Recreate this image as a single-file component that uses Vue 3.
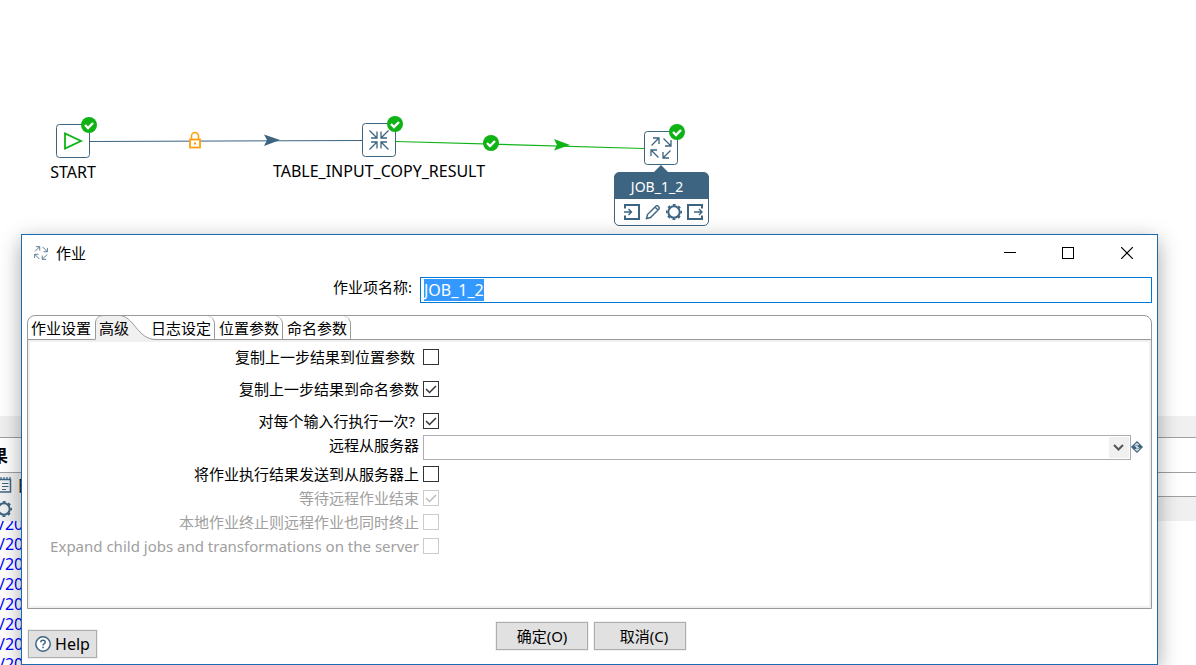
<script setup>
import { onMounted, ref } from 'vue'

const nameInput = ref(null)
const jobName = ref('JOB_1_2')
const activeTab = ref('高级')
const tabs = ['作业设置', '高级', '日志设定', '位置参数', '命名参数']
const logLines = ['/20', '/20', '/20', '/20', '/20', '/20', '/20', '/20']

const beforeSlave = ref([
  { id: 'args', label: '复制上一步结果到位置参数', checked: false, inset: true },
  { id: 'params', label: '复制上一步结果到命名参数', checked: true },
  { id: 'each-row', label: '对每个输入行执行一次?', checked: true, inset: true }
])
const afterSlave = ref([
  { id: 'pass', label: '将作业执行结果发送到从服务器上', checked: false },
  { id: 'wait', label: '等待远程作业结束', checked: true, disabled: true },
  { id: 'abort', label: '本地作业终止则远程作业也同时终止', checked: false, disabled: true },
  { id: 'expand', label: 'Expand child jobs and transformations on the server', checked: false, disabled: true }
])

onMounted(() => {
  nameInput.value.focus()
  nameInput.value.select()
})
</script>

<template>
  <main class="workspace">
    <section class="canvas">
      <svg class="graph" width="720" height="240" viewBox="0 0 720 240" aria-hidden="true">
        <defs>
          <g id="ok-badge">
            <circle r="8" fill="#0fb316" />
            <path d="M-4 0 L-1 3 L4 -2" fill="none" stroke="#fff" stroke-width="2.4" />
          </g>
          <g id="arrows-out" fill="none" stroke="#3d6480" stroke-width="1.3">
            <path d="M-9.5 -2.5 L-2.5 -9.5 M-8 -10 H-2 V-4" />
            <path d="M2.5 -9.5 L9.5 -2.5 M10 -8 V-2 H4" />
            <path d="M9.5 2.5 L2.5 9.5 M2 4 V10 H8" />
            <path d="M-2.5 9.5 L-9.5 2.5 M-10 8 V2 H-4" />
          </g>
        </defs>
        <path d="M90 141.5 L362 140.5" stroke="#3d6480" />
        <path d="M396 141.5 L644 148.5" stroke="#0fb316" stroke-width="1.2" />
        <path d="M264 134.5 L280 140 L264 146 L267 140 Z" fill="#3d6480" />
        <path d="M554 139 L570 145 L554 150.5 L557 145 Z" fill="#0fb316" />
        <g fill="none" stroke="#ff9f0f">
          <path d="M191.5 139 V136 A3.5 3.5 0 0 1 198.5 136 V139" stroke-width="1.6" />
          <rect x="190" y="139.5" width="10" height="8" fill="#fff" stroke-width="1.8" />
          <path d="M194 143.5 h2" stroke-width="2" />
        </g>
        <g fill="#fff" stroke="#3d6480">
          <rect x="56.5" y="124.5" width="33" height="33" rx="3" />
          <rect x="362.5" y="123.5" width="33" height="33" rx="3" />
          <rect x="644.5" y="131.5" width="33" height="33" rx="3" />
        </g>
        <path d="M65 133.5 V148.5 L81 141 Z" fill="none" stroke="#0fb316" stroke-width="1.8" />
        <g fill="none" stroke="#3d6480" stroke-width="1.3">
          <path d="M369.5 130.5 L376.5 137.5 M377 131.5 V138 H371" />
          <path d="M388.5 130.5 L381.5 137.5 M381 131.5 V138 H387" />
          <path d="M369.5 149.5 L376.5 142.5 M371 142 H377 V148.5" />
          <path d="M388.5 149.5 L381.5 142.5 M387 142 H381 V148.5" />
        </g>
        <use href="#arrows-out" x="661" y="148" />
        <use href="#ok-badge" x="89" y="125" />
        <use href="#ok-badge" x="395" y="124" />
        <use href="#ok-badge" x="491" y="143" />
        <use href="#ok-badge" x="677" y="132" />
      </svg>
      <span class="node-label start">START</span>
      <span class="node-label table">TABLE_INPUT_COPY_RESULT</span>
      <div class="hover-card">
        <div class="hover-name">JOB_1_2</div>
        <div class="hover-tools">
          <button type="button" aria-label="Input">
            <svg width="16" height="16" viewBox="0 0 16 16" fill="none" stroke="#3d6480">
              <path d="M1 4.5 V1 H15 V15 H1 V11.5" stroke-width="2" />
              <path d="M0 8 H7 M4.5 5 L7.5 8 L4.5 11" stroke-width="1.4" />
            </svg>
          </button>
          <button type="button" aria-label="Edit">
            <svg width="16" height="16" viewBox="0 0 16 16" fill="none" stroke="#3d6480" stroke-width="1.4">
              <path d="M1.5 14.5 L2.5 10.5 L10.8 2.2 Q12 1 13.4 2.5 Q15 4 13.8 5.2 L5.5 13.5 Z M10 3 L13 6" />
            </svg>
          </button>
          <button type="button" aria-label="Settings">
            <svg width="16" height="16" viewBox="0 0 16 16" fill="none" stroke="#3d6480">
              <circle cx="8" cy="8" r="5.7" stroke-width="2" />
              <circle cx="8" cy="8" r="7.2" stroke-width="1.7" stroke-dasharray="2.8 2.855" stroke-dashoffset="1.4" />
            </svg>
          </button>
          <button type="button" aria-label="Output">
            <svg width="16" height="16" viewBox="0 0 16 16" fill="none" stroke="#3d6480">
              <path d="M15 4.5 V1 H1 V15 H15 V11.5" stroke-width="2" />
              <path d="M7 8 H15 M12 5 L15 8 L12 11" stroke-width="1.4" />
            </svg>
          </button>
        </div>
      </div>
    </section>

    <section class="results">
      <div class="sash"></div>
      <h2 class="results-title">果</h2>
      <div class="results-tabs">
        <div class="results-tab">
          <svg width="12" height="16" viewBox="0 0 12 16" fill="none" stroke="#3d6480">
            <path d="M0 2.5 H10.5 V15 H0" stroke-width="1.5" />
            <path d="M1 0 V3 M4 0 V3 M7 0 V3 M10 0 V3" stroke-width="1.2" />
            <path d="M2 6.5 H8.5 M2 9.5 H8.5 M2 12.5 H6" />
          </svg>
          <span>日志</span>
        </div>
      </div>
      <div class="results-tools">
        <svg width="12" height="16" viewBox="4 0 12 16" fill="none" stroke="#3d6480">
          <circle cx="8" cy="8" r="5.7" stroke-width="2" />
          <circle cx="8" cy="8" r="7.2" stroke-width="1.7" stroke-dasharray="2.8 2.855" stroke-dashoffset="1.4" />
        </svg>
      </div>
      <div class="log">
        <div v-for="(line, i) in logLines" :key="i">{{ line }}</div>
      </div>
    </section>

    <form class="dialog" role="dialog" aria-label="作业" @submit.prevent>
      <header class="title-bar">
        <svg class="title-icon" width="14" height="14" viewBox="-11 -11 22 22" aria-hidden="true">
          <use href="#arrows-out" />
        </svg>
        <span class="title">作业</span>
        <button type="button" aria-label="Minimize">
          <svg width="12" height="12"><path d="M0 5.5 H12" stroke="#000" /></svg>
        </button>
        <button type="button" aria-label="Maximize">
          <svg width="12" height="12"><rect x=".5" y=".5" width="11" height="11" fill="none" stroke="#000" /></svg>
        </button>
        <button type="button" class="close" aria-label="Close">
          <svg width="12" height="12"><path d="M0 0 L12 12 M12 0 L0 12" stroke="#000" stroke-width="1.2" /></svg>
        </button>
      </header>

      <div class="name-row">
        <label for="job-name">作业项名称:</label>
        <input id="job-name" ref="nameInput" v-model="jobName" type="text" autocomplete="off" spellcheck="false" />
      </div>

      <section class="folder">
        <nav class="tabs" role="tablist">
          <button
            v-for="tab in tabs"
            :key="tab"
            type="button"
            role="tab"
            class="tab"
            :class="{ active: tab === activeTab }"
            :aria-selected="tab === activeTab"
            @click="activeTab = tab"
          >
            <svg v-if="tab === activeTab" class="tab-shape" width="62" height="25" viewBox="0 0 62 25" aria-hidden="true">
              <path d="M.5 25 V7 L7 .5 H24 C39 .5 42 24.5 61 24.5 V25 Z" fill="#f0f0f0" />
              <path d="M.5 24 V7 Q1.5 1.5 7 .5 H24 C39 .5 42 24.5 61 24.5" fill="none" stroke="#999" />
            </svg>
            <span>{{ tab }}</span>
          </button>
        </nav>
        <div class="page">
          <div class="group spaced">
            <div v-for="row in beforeSlave" :key="row.id" class="row">
              <label :for="row.id" :class="{ inset: row.inset }">{{ row.label }}</label>
              <span class="check">
                <input :id="row.id" v-model="row.checked" type="checkbox" />
                <svg v-if="row.checked" width="16" height="16"><path d="M3 8 L6.5 11.5 L13 5" /></svg>
              </span>
            </div>
          </div>
          <div class="row combo-row">
            <label for="slave">远程从服务器</label>
            <span class="combo">
              <select id="slave"><option></option></select>
              <svg class="combo-arrow" width="20" height="21" aria-hidden="true">
                <rect width="20" height="21" fill="#f0f0f0" />
                <path d="M5 8 L9.5 12.5 L14 8" fill="none" stroke="#555" stroke-width="2" />
              </svg>
            </span>
            <svg class="variable" width="12" height="13" viewBox="0 0 12 13" aria-hidden="true">
              <path d="M6 .5 L11.5 6 L6 11.5 L.5 6 Z" fill="#3d6480" stroke="#3d6480" stroke-linejoin="round" />
              <path d="M8 4 Q7.5 3 6 3 Q4 3 4 4.5 Q4 5.7 6 6 Q8 6.3 8 7.5 Q8 9 6 9 Q4.5 9 4 8 M6 2 V10" fill="none" stroke="#fff" stroke-width=".9" />
            </svg>
          </div>
          <div class="group">
            <div v-for="row in afterSlave" :key="row.id" class="row" :class="{ off: row.disabled }">
              <label :for="row.id">{{ row.label }}</label>
              <span class="check">
                <input :id="row.id" v-model="row.checked" type="checkbox" :disabled="row.disabled" />
                <svg v-if="row.checked" width="16" height="16"><path d="M3 8 L6.5 11.5 L13 5" /></svg>
              </span>
            </div>
          </div>
        </div>
      </section>

      <footer class="footer">
        <button type="button" class="btn help">
          <svg width="16" height="16" viewBox="0 0 16 16" fill="none" stroke="#3d6480" aria-hidden="true">
            <circle cx="8" cy="8" r="7.2" fill="#fff" stroke-width="1.5" />
            <path d="M5.8 6.3 Q5.8 4.3 8 4.3 Q10.2 4.3 10.2 6.2 Q10.2 7.3 9 7.9 Q8 8.4 8 9.6 M8 10.8 V12.2" stroke-width="1.5" />
          </svg>
          Help
        </button>
        <div class="actions">
          <button type="submit" class="btn">确定(O)</button>
          <button type="button" class="btn cancel">取消(C)</button>
        </div>
      </footer>
    </form>
  </main>
</template>

<style>
body {
  margin: 0;
  overflow: hidden;
  background: #fff;
}
</style>

<style scoped>
.workspace {
  position: relative;
  display: flex;
  flex-direction: column;
  height: 100vh;
  overflow: hidden;
  color: #000;
  font: 15px/20px "Noto Sans", "Noto Sans CJK SC", sans-serif;
}
button, input, select {
  font: inherit;
  color: inherit;
}
button {
  padding: 0;
  border: 0;
  background: none;
}
svg {
  display: block;
  flex: none;
}

.canvas {
  position: relative;
  flex: none;
  height: 416px;
}
.graph {
  position: absolute;
  top: 0;
  left: 0;
}
.node-label {
  position: absolute;
  transform: translateX(-50%);
  font-size: 16px;
  white-space: nowrap;
}
.start {
  left: 73px;
  top: 162px;
}
.table {
  left: 379px;
  top: 161px;
}
.hover-card {
  position: absolute;
  left: 614px;
  top: 172px;
  box-sizing: border-box;
  width: 95px;
  border: 1px solid #3d6480;
  border-radius: 5px;
  background: #fff;
}
.hover-card::before {
  content: "";
  position: absolute;
  left: 38px;
  top: -8px;
  border: 8px solid transparent;
  border-top: 0;
  border-bottom-color: #3d6480;
}
.hover-name {
  height: 26px;
  padding-right: 9px;
  border-radius: 3px 3px 0 0;
  background: #3d6480;
  color: #fff;
  font-size: 14px;
  line-height: 28px;
  text-align: center;
}
.hover-tools {
  display: flex;
  justify-content: flex-end;
  gap: 5px;
  padding: 5px;
}

.results {
  flex: 1;
  min-height: 0;
  overflow: hidden;
}
.sash {
  height: 21px;
  background: #f0f0f0;
}
.results-title {
  height: 34px;
  margin: 0 0 0 -9px;
  border-top: 1px solid #a0a0a0;
  font-size: 17px;
  line-height: 35px;
}
.results-tabs {
  height: 23px;
  border-top: 1px solid #a0a0a0;
  border-bottom: 1px solid #a0a0a0;
}
.results-tab {
  display: flex;
  align-items: center;
  gap: 5px;
  width: 80px;
  height: 24px;
  background: #f0f0f0;
}
.results-tools {
  display: flex;
  align-items: center;
  height: 24px;
  background: #f0f0f0;
}
.log {
  margin: -7px 0 0 -1px;
  color: #00f;
  font-size: 16px;
  clip-path: inset(7px 0 0 0);
}

.dialog {
  position: absolute;
  inset: 234px 38px 0 21px;
  display: flex;
  flex-direction: column;
  border: 1px solid #1a6cb0;
  background: #fff;
  box-shadow: 0 6px 20px rgba(0, 0, 0, .35);
}
.title-bar {
  display: flex;
  align-items: center;
  height: 36px;
  padding-left: 12px;
}
.title {
  flex: 1;
  margin-left: 8px;
}
.title-bar button {
  display: grid;
  place-items: center;
  width: 58px;
  height: 36px;
}
.title-bar .close {
  width: 60px;
}
.name-row {
  display: flex;
  margin: 6px 5px 12px;
}
.name-row label {
  width: 385px;
  margin-right: 8px;
  text-align: right;
}
.name-row input {
  box-sizing: border-box;
  flex: 1;
  min-width: 0;
  height: 26px;
  padding: 2px 3px;
  border: 1px solid #0078d7;
  outline: 0;
  font-size: 16px;
  line-height: 20px;
}
.name-row input::selection {
  background: #39f;
  color: #fff;
}

.folder {
  flex: none;
  margin: 0 5px;
  border: 1px solid #999;
  border-radius: 8px 8px 0 0;
}
.tabs {
  display: flex;
  height: 23px;
  border-bottom: 1px solid #999;
}
.tab {
  position: relative;
  box-sizing: border-box;
  width: 68px;
  height: 23px;
  padding-left: 4px;
  border-right: 1px solid #999;
  border-top-right-radius: 8px;
  text-align: left;
  white-space: nowrap;
}
.tab:first-child {
  width: 67px;
  padding-left: 3px;
  border-right: 0;
}
.tab.active {
  z-index: 1;
  width: 52px;
  border: 0;
}
.tab span {
  position: relative;
}
.tab-shape {
  position: absolute;
  left: 0;
  top: -1px;
}
.page {
  display: flex;
  flex-direction: column;
  gap: 2px;
  height: 261px;
  padding: 3px 0 0;
  border: 2px solid #f0f0f0;
}
.group {
  display: flex;
  flex-direction: column;
}
.spaced {
  gap: 8px;
}
.row {
  display: flex;
  align-items: center;
  height: 24px;
}
.row > label {
  flex: none;
  box-sizing: border-box;
  width: 393px;
  padding-right: 4px;
  text-align: right;
  white-space: nowrap;
}
.row > .inset {
  padding-right: 8px;
}
.check {
  position: relative;
}
.check input {
  appearance: none;
  display: block;
  box-sizing: border-box;
  width: 16px;
  height: 16px;
  margin: 0;
  border: 1px solid #333;
  background: #fff;
}
.check svg {
  position: absolute;
  inset: 0;
  fill: none;
  stroke: #333;
  stroke-width: 1.5;
  pointer-events: none;
}
.off {
  color: #a0a0a0;
}
.off input {
  border-color: #ccc;
}
.off svg {
  stroke: #bbb;
}
.combo-row {
  height: 25px;
  padding-right: 6px;
}
.combo-row > label {
  align-self: flex-start;
}
.combo {
  position: relative;
  flex: 1;
}
.combo select {
  appearance: none;
  display: block;
  box-sizing: border-box;
  width: 100%;
  height: 25px;
  border: 1px solid #abadb3;
  border-radius: 0;
  background: #fff;
}
.combo-arrow {
  position: absolute;
  top: 2px;
  right: 2px;
  pointer-events: none;
}

.footer {
  display: grid;
  grid-template-columns: 1fr auto 1fr;
  align-items: end;
  padding: 13px 3px 0 6px;
}
.btn {
  box-sizing: border-box;
  height: 28px;
  border: 1px solid #adadad;
  background: #e1e1e1;
  box-shadow: 0 0 0 1px #f0f0f0;
}
.help {
  display: flex;
  align-items: center;
  justify-content: center;
  justify-self: start;
  gap: 4px;
  width: 69px;
  font-size: 16px;
}
.actions {
  display: flex;
  align-self: start;
  gap: 6px;
  padding-bottom: 8px;
}
.actions .btn {
  width: 92px;
}
.actions .cancel {
  padding-left: 8px;
}
</style>
